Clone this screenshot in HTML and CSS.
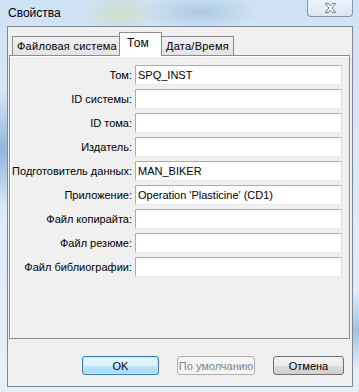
FILE: index.html
```html
<!DOCTYPE html>
<html lang="ru">
<head>
    <meta charset="UTF-8">
    <meta name="viewport" content="width=device-width, initial-scale=1.0">
    <title>Свойства</title>
    <link rel="stylesheet" href="styles.css">
</head>
<body>
    <div class="window">
        <div class="titlebar">
            <span class="title">Свойства</span>
            <button type="button" class="close">
                <svg width="13" height="10" viewBox="0 0 13 10">
                    <path d="M1.5 0.5h3l2 2.4 2-2.4h3l-3.4 4.5 3.4 4.5h-3l-2-2.4-2 2.4h-3l3.4-4.5z" fill="#fff" stroke="#6c7785" stroke-width="1"/>
                </svg>
            </button>
        </div>

        <div class="client">
            <div class="tabs">
                <div class="tab first">Файловая система</div>
                <div class="tab active">Том</div>
                <div class="tab last">Дата/Время</div>
            </div>

            <div class="page">
                <form class="fields">
                    <label>Том:</label>
                    <input type="text" value="SPQ_INST">
                    <label>ID системы:</label>
                    <input type="text" value="">
                    <label>ID тома:</label>
                    <input type="text" value="">
                    <label>Издатель:</label>
                    <input type="text" value="">
                    <label>Подготовитель данных:</label>
                    <input type="text" value="MAN_BIKER">
                    <label>Приложение:</label>
                    <input type="text" value="Operation 'Plasticine' (CD1)">
                    <label>Файл копирайта:</label>
                    <input type="text" value="">
                    <label>Файл резюме:</label>
                    <input type="text" value="">
                    <label>Файл библиографии:</label>
                    <input type="text" value="">
                </form>
            </div>

            <div class="buttons">
                <button type="button" class="btn default">OK</button>
                <button type="button" class="btn" disabled>По умолчанию</button>
                <button type="button" class="btn cancel">Отмена</button>
            </div>
        </div>
    </div>
</body>
</html>
```

FILE: styles.css
```css
body {
    margin: 0;
    font-family: "Liberation Sans", Arial, sans-serif;
    font-size: 11px;
}

.window {
    width: 359px;
    height: 392px;
    box-sizing: border-box;
    display: flex;
    flex-direction: column;
    padding: 0 6px 5px 7px;
    background:
        radial-gradient(ellipse 30px 60px at 2px 150px, #8fb6dc, transparent),
        radial-gradient(ellipse 40px 20px at 120px 14px, rgba(200, 215, 160, 0.5), transparent),
        radial-gradient(ellipse 60px 18px at 200px 12px, rgba(150, 185, 215, 0.6), transparent),
        radial-gradient(ellipse 50px 40px at 356px 330px, #9cc4e6, transparent),
        linear-gradient(180deg, #cfe2f4 0%, #dbe9f6 40%, #e6f0f9 100%);
}

.titlebar {
    height: 26px;
    display: flex;
    justify-content: space-between;
    align-items: flex-start;
}

.title {
    margin: 6px 0 0 1px;
    font-size: 12px;
    color: #000;
}

.close {
    width: 46px;
    height: 17px;
    padding: 0;
    border: 1px solid #8494a8;
    border-top: none;
    border-radius: 0 0 4px 4px;
    background: linear-gradient(180deg, rgba(255, 255, 255, 0.6), rgba(220, 232, 244, 0.7));
    display: flex;
    align-items: center;
    justify-content: center;
}

.client {
    flex: 1;
    display: flex;
    flex-direction: column;
    background: #f0f0f0;
    border: 1px solid #7f8691;
}

.tabs {
    display: flex;
    align-items: flex-end;
    margin: 5px 0 0 4px;
    height: 23px;
}

.tab {
    height: 18px;
    line-height: 19px;
    letter-spacing: 0.25px;
    border: 1px solid #898c95;
    border-bottom: none;
    background: linear-gradient(180deg, #f2f2f2, #e3e3e3);
    color: #000;
    white-space: nowrap;
}

.tab.first {
    padding: 0 2px 0 4px;
}

.tab.active {
    height: 22px;
    line-height: 20px;
    width: 34px;
    margin: 0 -1px -1px;
    padding: 0 0 1px 7px;
    font-size: 12px;
    background: #fff;
    position: relative;
}

.tab.last {
    padding: 0 4px;
}

.page {
    height: 282px;
    margin: 0 2px 0 1px;
    border: 1px solid #898c95;
    background: #f0f0f0;
    box-shadow: inset 1px 1px 0 #fff;
}

.fields {
    display: grid;
    grid-template-columns: 122px 207px;
    column-gap: 3px;
    row-gap: 4px;
    padding-top: 9px;
}

.fields label {
    text-align: right;
    line-height: 20px;
    color: #000;
    white-space: nowrap;
}

.fields input {
    height: 20px;
    box-sizing: border-box;
    margin: 0;
    padding: 0 2px;
    font: inherit;
    color: #000;
    background: #fff;
    border: 1px solid #abadb3;
    border-right-color: #dbdfe6;
    border-bottom-color: #e3e9ef;
}

.buttons {
    display: flex;
    gap: 18px;
    margin: 17px 0 0 74px;
}

.btn {
    height: 19px;
    width: 78px;
    padding: 0;
    font: inherit;
    color: #000;
    border: 1px solid #707070;
    border-radius: 3px;
    background: linear-gradient(180deg, #f2f2f2 0%, #ebebeb 50%, #dddddd 51%, #cfcfcf 100%);
}

.btn.default {
    width: 77px;
    border-color: #3c7fb1;
    background: linear-gradient(180deg, #eaf6fd 0%, #d9f0fc 50%, #bee6fd 51%, #a7d9f5 100%);
    box-shadow: inset 0 0 0 1px #c3e6f8;
}

.btn:disabled {
    color: #838383;
    border-color: #adb2b5;
    background: #f4f4f4;
}

.btn.cancel {
    width: 71px;
}
```
